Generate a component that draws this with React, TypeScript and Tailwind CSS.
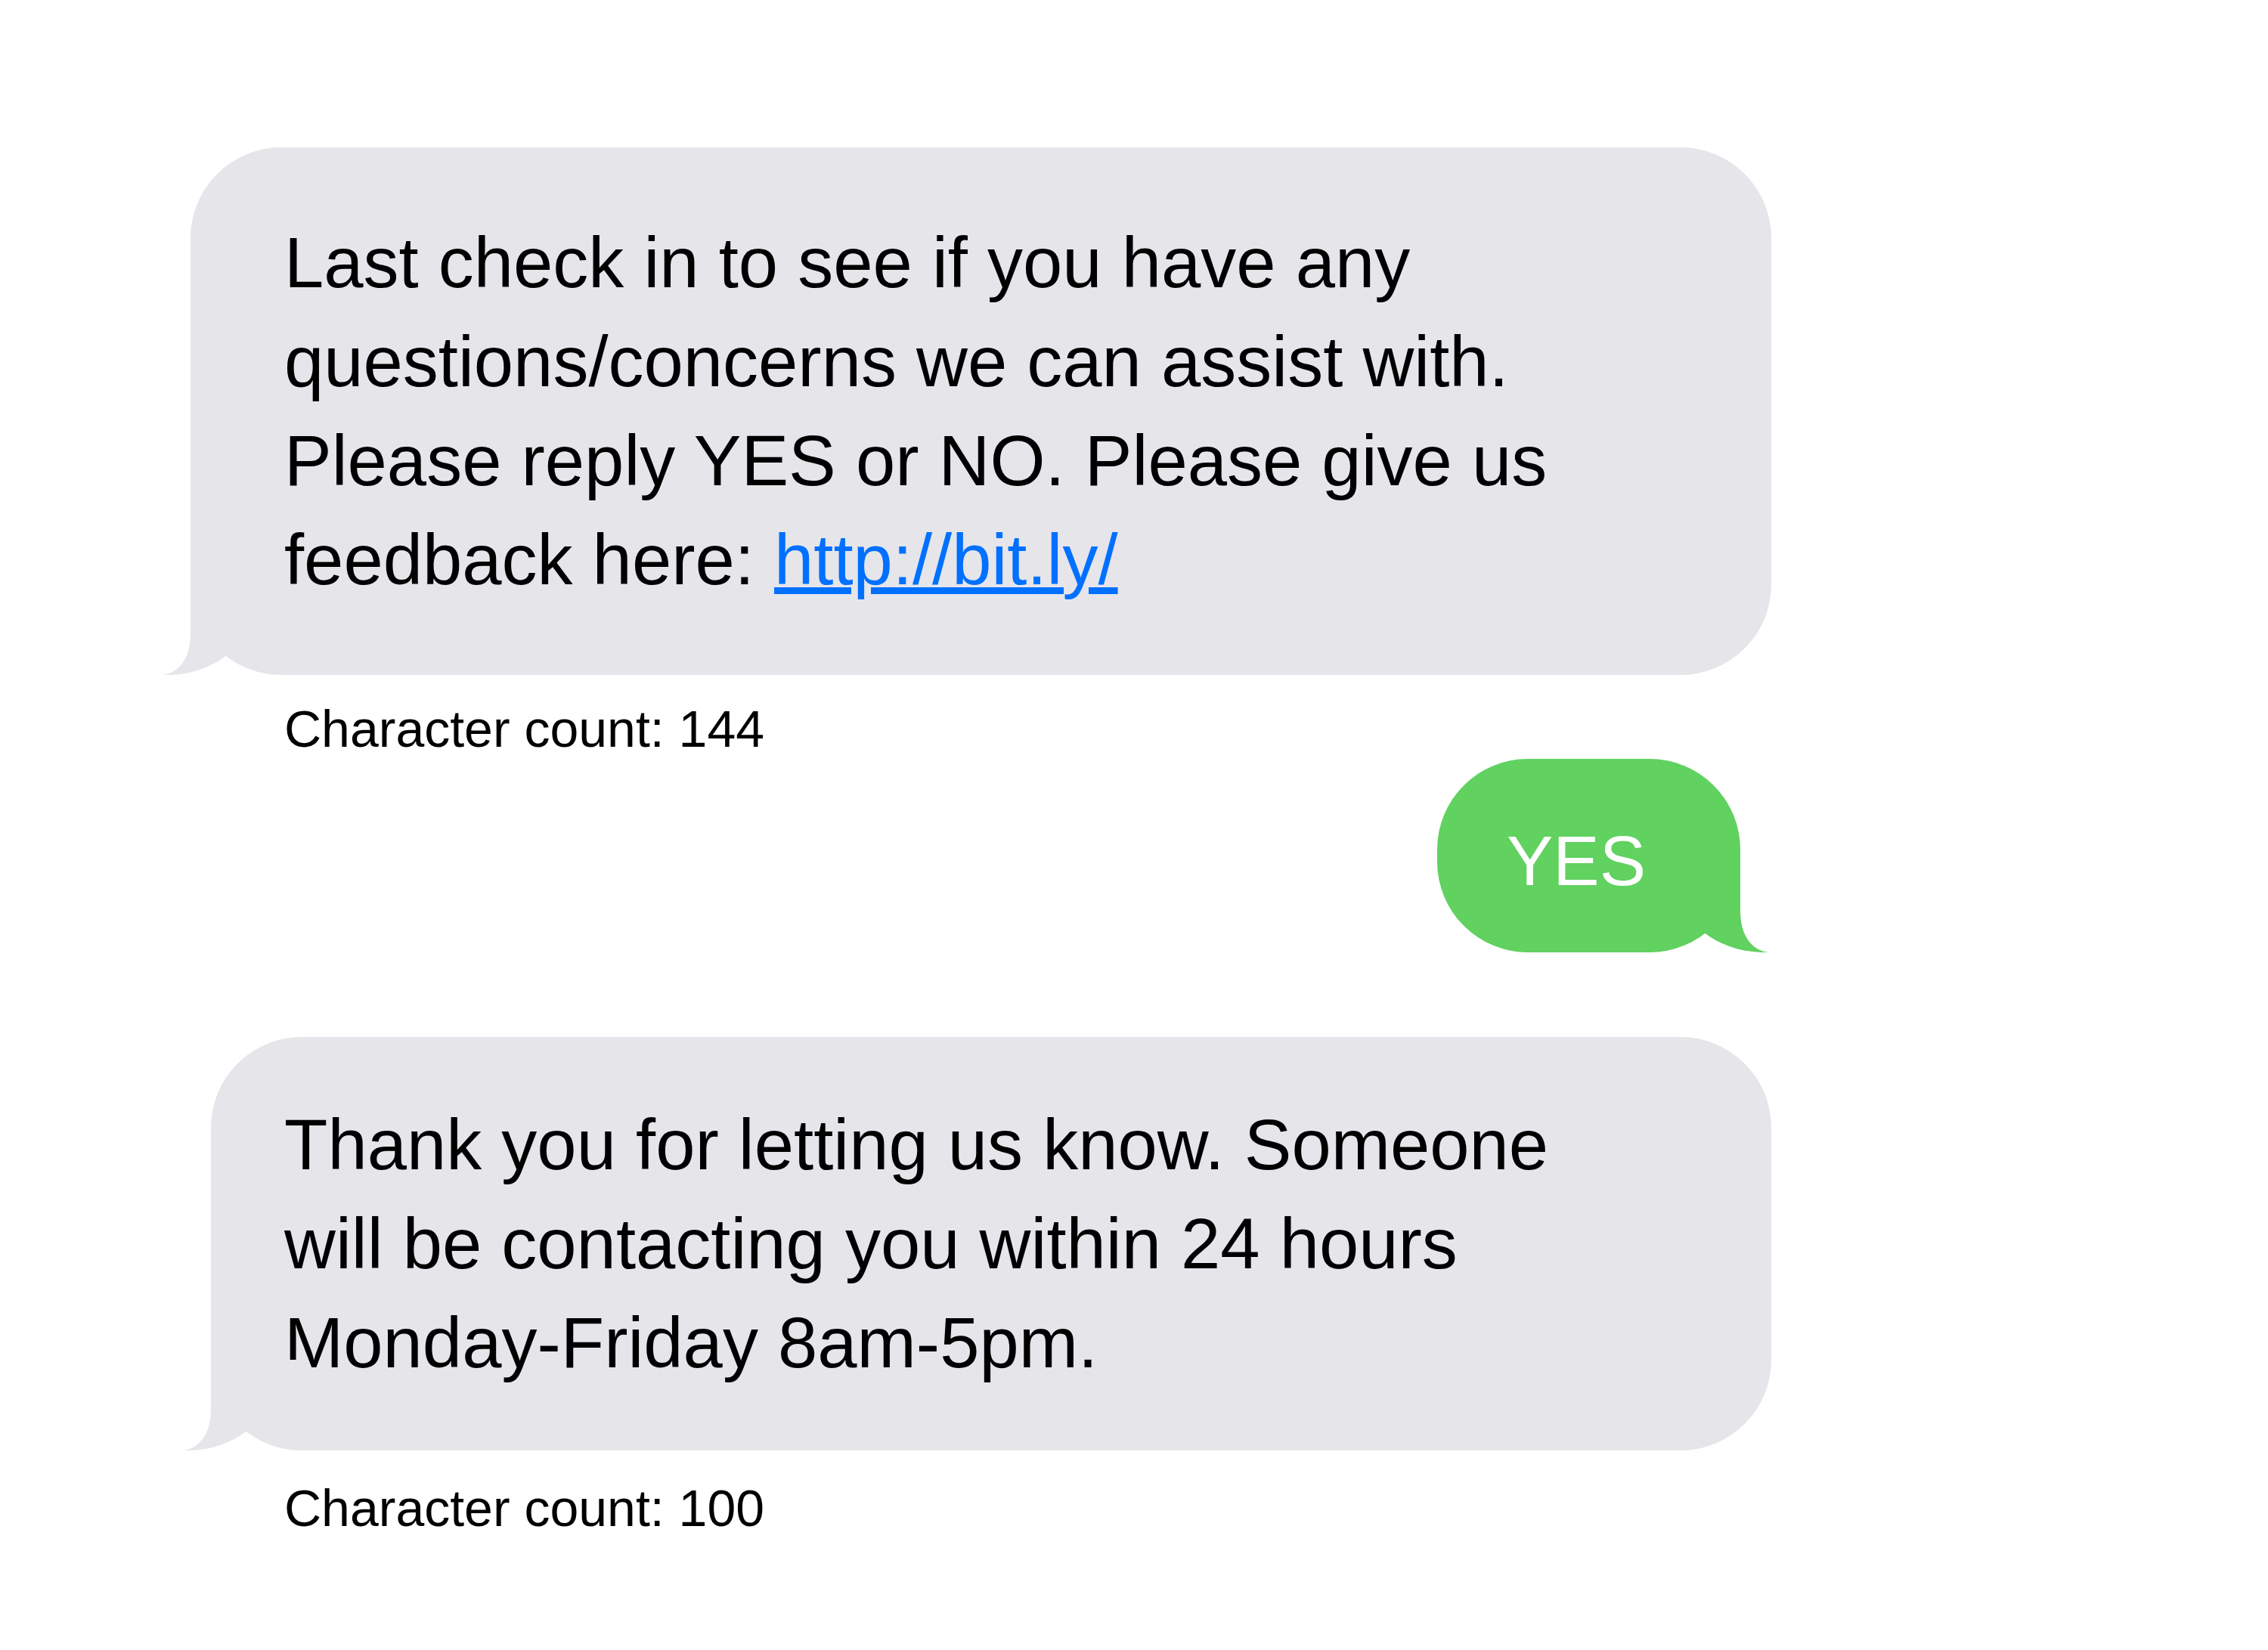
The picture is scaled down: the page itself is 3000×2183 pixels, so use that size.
const Tail = ({ color, flip }: { color: string; flip?: boolean }) => (
  <svg
    width="170"
    height="130"
    viewBox="0 0 170 130"
    className={
      flip
        ? "absolute bottom-0 right-[-40px] -scale-x-100"
        : "absolute bottom-0 left-[-40px]"
    }
  >
    <path
      d="M40 10 L40 75 C40 108 25 127 3 130 C35 131 65 122 89 103 L160 10 Z"
      fill={color}
    />
  </svg>
);

const App = () => {
  return (
    <div
      className="min-h-screen bg-white text-black"
      style={{ fontFamily: '"Liberation Sans", Arial, sans-serif' }}
    >
      <div className="flex w-[2343px] flex-col pt-[195px]">
        {/* incoming message */}
        <div className="relative ml-[252px] w-[2091px] rounded-[120px] bg-[#e5e5ea] py-[87px] pl-[124px]">
          <p className="w-[1700px] text-[94px] leading-[131px]">
            Last check in to see if you have any questions/concerns we can
            assist with. Please reply YES or NO. Please give us feedback here:{" "}
            <a
              href="#"
              className="text-[#0070ff] underline decoration-[length:9px] underline-offset-4"
            >
              http://bit.ly/
            </a>
          </p>
          <Tail color="#e5e5ea" />
        </div>
        <p className="ml-[376px] mt-[31px] text-[68px] leading-[80px]">
          Character count: 144
        </p>

        {/* reply */}
        <div className="relative mr-[41px] h-[256px] w-[401px] self-end rounded-[120px] bg-[#61d160] pl-[92px] pt-[89px]">
          <span className="block text-[92px] leading-[92px] text-white">YES</span>
          <Tail color="#61d160" flip />
        </div>

        {/* incoming message */}
        <div className="relative ml-[279px] mt-[112px] w-[2064px] rounded-[120px] bg-[#e5e5ea] py-[77px] pl-[97px]">
          <p className="w-[1700px] text-[94px] leading-[131px]">
            Thank you for letting us know. Someone will be contacting you within
            24 hours Monday-Friday 8am-5pm.
          </p>
          <Tail color="#e5e5ea" />
        </div>
        <p className="ml-[376px] mt-[36px] text-[68px] leading-[80px]">
          Character count: 100
        </p>
      </div>
    </div>
  );
};

export default App;
